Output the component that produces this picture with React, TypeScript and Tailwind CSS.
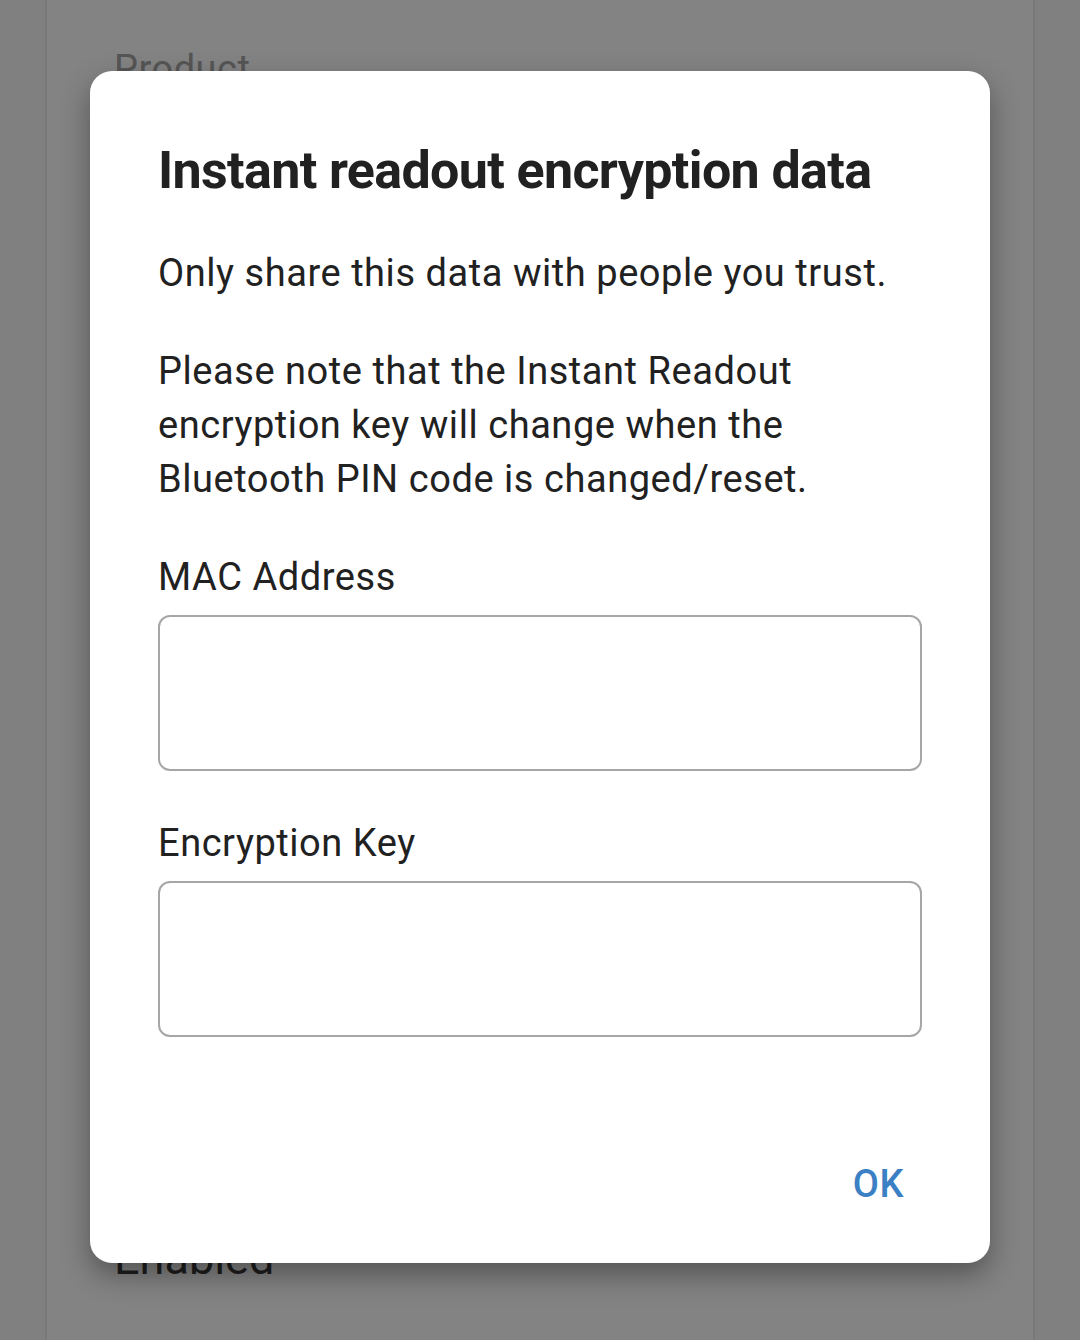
import React from 'react';

function Field({ label }: { label: string }) {
  return (
    <div>
      <div className="text-[38px] leading-[54px] tracking-[0.55px] text-[#212121]">{label}</div>
      <input className="mt-[11px] block h-[156px] w-full rounded-[12px] border-2 border-[#a6a6a6] bg-white outline-none" />
    </div>
  );
}

export default function App() {
  return (
    <div className="relative h-[1340px] w-[1080px] overflow-hidden bg-[#808080] font-['Roboto',sans-serif]">
      <div className="mx-[45px] h-full border-x-2 border-[#787878] bg-[#838383] px-[67px]">
        <div className="pt-[42px] text-[38px] leading-[54px] tracking-[0.5px] text-[#555555]">Product</div>
        <div className="mt-[1133px] text-[45px] leading-[60px] text-[#1e1e1e]">Enabled</div>
      </div>

      <div className="absolute left-[90px] top-[71px] flex h-[1192px] w-[900px] flex-col rounded-[22px] bg-white px-[68px] shadow-[0_12px_28px_rgba(0,0,0,0.35)]">
        <h1 className="pt-[70px] text-[52px] font-bold leading-[60px] tracking-[-0.65px] text-[#212121]">
          Instant readout encryption data
        </h1>
        <p className="mt-[45px] text-[38px] leading-[54px] tracking-[0.55px] text-[#212121]">
          Only share this data with people you trust.
        </p>
        <p className="mt-[44px] text-[38px] leading-[54px] tracking-[0.55px] text-[#212121]">
          Please note that the Instant Readout encryption key will change when the Bluetooth PIN code is changed/reset.
        </p>
        <div className="mt-[44px] flex flex-col gap-[45px]">
          <Field label="MAC Address" />
          <Field label="Encryption Key" />
        </div>
        <div className="mt-auto flex justify-end pb-[52px]">
          <button className="mr-[18px] text-[38px] font-medium leading-[54px] tracking-[0.5px] text-[#3b7fc4]">OK</button>
        </div>
      </div>
    </div>
  );
}
